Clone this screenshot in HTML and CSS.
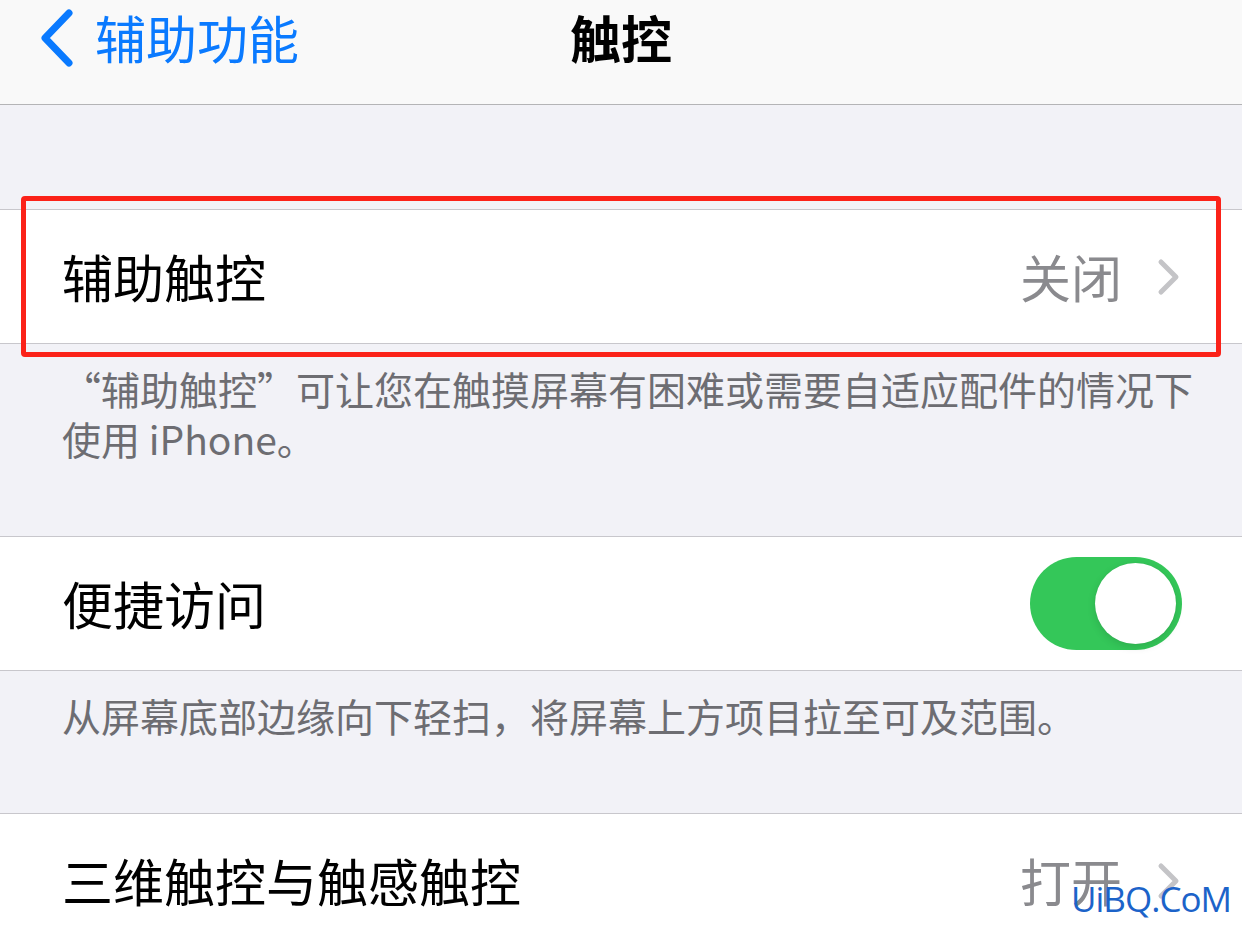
FILE: index.html
```html
<!DOCTYPE html>
<html lang="zh-CN">
<head>
<meta charset="utf-8">
<title>触控</title>
<link rel="stylesheet" href="styles.css">
</head>
<body>
<header class="nav">
  <div class="nav-back">
    <svg class="back-icon" width="36" height="58" viewBox="0 0 36 58"><path d="M31 4 L7 29 L31 54" fill="none" stroke="#0a7aff" stroke-width="7" stroke-linecap="round" stroke-linejoin="round"/></svg>
    <span class="back-label">辅助功能</span>
  </div>
  <h1 class="nav-title">触控</h1>
  <div class="nav-side"></div>
</header>

<main class="content">
  <div class="gap"></div>

  <section class="group">
    <div class="row">
      <span class="row-label">辅助触控</span>
      <span class="row-value">关闭</span>
      <svg class="chev" width="26" height="40" viewBox="0 0 26 40"><path d="M5 5 L20 20 L5 35" fill="none" stroke="#c4c4c7" stroke-width="5" stroke-linecap="round" stroke-linejoin="round"/></svg>
    </div>
    <div class="highlight"></div>
  </section>
  <p class="footer">“辅助触控”可让您在触摸屏幕有困难或需要自适应配件的情况下使用 iPhone。</p>

  <section class="group">
    <div class="row">
      <span class="row-label">便捷访问</span>
      <span class="switch"><span class="knob"></span></span>
    </div>
  </section>
  <p class="footer">从屏幕底部边缘向下轻扫，将屏幕上方项目拉至可及范围。</p>

  <section class="group">
    <div class="row">
      <span class="row-label">三维触控与触感触控</span>
      <span class="row-value">打开</span>
      <svg class="chev" width="26" height="40" viewBox="0 0 26 40"><path d="M5 5 L20 20 L5 35" fill="none" stroke="#c4c4c7" stroke-width="5" stroke-linecap="round" stroke-linejoin="round"/></svg>
    </div>
    <span class="watermark">UiBQ.CoM</span>
  </section>
</main>
</body>
</html>
```

FILE: styles.css
```css
* { box-sizing: border-box; }

html, body {
  margin: 0;
  padding: 0;
  background: #f2f2f7;
  font-family: "Noto Sans CJK SC", "Noto Sans", sans-serif;
  overflow: hidden;
}

.nav {
  height: 105px;
  background: #f9f9f9;
  border-bottom: 1px solid #b4b4b6;
  display: grid;
  grid-template-columns: 1fr auto 1fr;
  align-items: center;
  padding-bottom: 30px;
}

.nav-back {
  display: flex;
  align-items: center;
  padding-left: 38px;
  gap: 21px;
}

.back-icon { display: block; margin-top: 2px; }

.back-label {
  color: #0a7aff;
  font-size: 51px;
  line-height: 1;
}

.nav-title {
  margin: 0;
  font-size: 51px;
  font-weight: 700;
  line-height: 1;
  color: #000;
}

.gap { height: 104px; }

.group {
  position: relative;
  background: #fff;
  border-top: 1px solid #c8c7cc;
  border-bottom: 1px solid #c8c7cc;
}

.row {
  height: 133px;
  display: flex;
  align-items: center;
  padding: 0 60px 0 62px;
}

.row-label {
  flex: 1;
  font-size: 51px;
  color: #000;
  line-height: 1;
}

.row-value {
  font-size: 51px;
  color: #8a8a8e;
  line-height: 1;
  margin-right: 34px;
}

.chev { display: block; }

.highlight {
  position: absolute;
  left: 21px;
  top: -14px;
  width: 1200px;
  height: 161px;
  border: 5px solid #fb2219;
  border-radius: 4px;
}

.footer {
  margin: 0;
  padding: 19px 40px 73px 62px;
  font-size: 39px;
  line-height: 50px;
  color: #6d6d72;
}

.switch {
  position: relative;
  width: 152px;
  height: 93px;
  border-radius: 47px;
  background: #34c759;
  display: block;
}

.knob {
  position: absolute;
  right: 6px;
  top: 6px;
  width: 81px;
  height: 81px;
  border-radius: 50%;
  background: #fff;
  box-shadow: 0 3px 8px rgba(0,0,0,0.12), 0 0 1px rgba(0,0,0,0.1);
}

.watermark {
  position: absolute;
  left: 1071px;
  top: 67px;
  font-family: "Open Sans", "Liberation Sans", sans-serif;
  font-size: 35px;
  line-height: 1;
  letter-spacing: -1px;
  color: #1c63c9;
}
```
